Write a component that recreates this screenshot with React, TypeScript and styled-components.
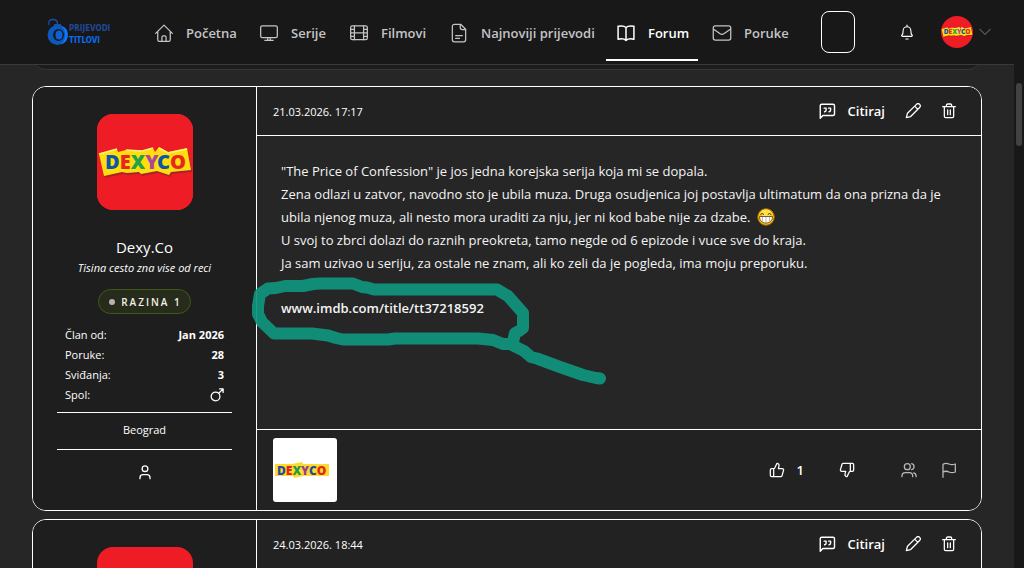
import React from "react";
import styled, { createGlobalStyle, css } from "styled-components";

const GlobalStyle = createGlobalStyle`
  *, *::before, *::after { box-sizing: border-box; }
  body {
    margin: 0;
    background: #262626;
    color: #ffffff;
    font-family: "Open Sans", "Noto Sans", sans-serif;
    font-size: 13px;
  }
  button { font: inherit; color: inherit; background: none; border: 0; padding: 0; cursor: pointer; }
  a { color: inherit; text-decoration: none; }
  h2, p, dl, dd { margin: 0; }
  svg { display: block; flex: none; }
`;

const Shell = styled.div`
  display: grid;
  grid-template-columns: minmax(0, 1fr) 10px;
  height: 100vh;
  overflow: hidden;
`;

const Page = styled.div`
  display: flex;
  flex-direction: column;
  min-height: 0;
`;

const ScrollRail = styled.div`
  background: #181818;
  padding: 83px 2px 0;
`;

const ScrollThumb = styled.div`
  height: 63px;
  border-radius: 3px;
  background: #424242;
`;

const Header = styled.header`
  position: relative;
  z-index: 2;
  flex: none;
  display: flex;
  align-items: center;
  height: 65px;
  padding: 0 23px 0 46px;
  background: #181818;
  border-bottom: 1px solid #3a3a3a;
`;

const Brand = styled.a`
  display: block;
  width: 98px;
  flex: none;
`;

const Nav = styled.nav`
  display: flex;
  gap: 4px;
  align-self: stretch;
`;

const NavLink = styled.a<{ $active?: boolean; $width: number }>`
  display: flex;
  align-items: center;
  gap: 12px;
  width: ${(p) => p.$width}px;
  padding: 6px 0 0 10px;
  margin-bottom: 3px;
  border-bottom: 2px solid ${(p) => (p.$active ? "#ffffff" : "transparent")};
  color: ${(p) => (p.$active ? "#ffffff" : "#c4c4c4")};
  font-size: 13px;
  font-weight: 600;
  white-space: nowrap;
`;

const HeaderTools = styled.div`
  display: flex;
  align-items: center;
  flex: 1;
  padding-left: 23px;
`;

const EmptyBox = styled.button`
  width: 34px;
  height: 42px;
  border: 1px solid #ffffff;
  border-radius: 8px;
`;

const BellButton = styled.button`
  margin-left: auto;
  padding: 8px;
`;

const ProfileButton = styled.button`
  display: flex;
  align-items: center;
  gap: 6px;
  margin-left: 18px;
`;

const RoundAvatar = styled.span`
  width: 32px;
  height: 32px;
  border-radius: 50%;
  overflow: hidden;
`;

const Thread = styled.main`
  display: flex;
  flex-direction: column;
  flex: 1;
  min-height: 0;
  padding: 0 32px;
  overflow: hidden;
`;

const PreviousPost = styled.div`
  flex: none;
  height: 32px;
  margin-top: -27px;
  margin-bottom: 16px;
  background: #1c1c1c;
  border: 1px solid #363636;
  border-radius: 14px;
`;

const Card = styled.article`
  position: relative;
  flex: none;
  display: grid;
  grid-template-columns: 224px minmax(0, 1fr);
  margin-bottom: 8px;
  border: 1px solid #ffffff;
  border-radius: 14px;
  overflow: hidden;
`;

const Sidebar = styled.aside`
  display: flex;
  flex-direction: column;
  align-items: center;
  padding: 27px 24px 30px;
  background: #1e1e1e;
  border-right: 1px solid #ffffff;
`;

const SquareAvatar = styled.div`
  width: 96px;
  height: 96px;
  border-radius: 16px;
  background: #ee1c25;
  overflow: hidden;
`;

const UserName = styled.h2`
  margin-top: 26px;
  font-size: 15px;
  font-weight: 400;
  line-height: 22px;
`;

const Motto = styled.p`
  font-size: 11px;
  font-style: italic;
  line-height: 20px;
`;

const Level = styled.span`
  display: flex;
  align-items: center;
  gap: 6px;
  height: 25px;
  margin-top: 11px;
  padding: 0 8px 0 10px;
  background: #262b1b;
  border: 1px solid #3e5a16;
  border-radius: 13px;
  color: #f2f2e6;
  font-size: 10px;
  font-weight: 600;
  letter-spacing: 2px;
`;

const Dot = styled.i`
  width: 6px;
  height: 6px;
  border-radius: 50%;
  background: #b4b4ac;
`;

const Stats = styled.dl`
  align-self: stretch;
  margin-top: 11px;
  padding: 0 8px 7px;
  border-bottom: 1px solid #ffffff;
`;

const Stat = styled.div`
  display: flex;
  align-items: center;
  justify-content: space-between;
  font-size: 11px;
  line-height: 20px;
  dd { font-weight: 700; }
`;

const City = styled.p`
  align-self: stretch;
  height: 37px;
  border-bottom: 1px solid #ffffff;
  font-size: 11px;
  line-height: 34px;
  text-align: center;
`;

const UserLink = styled.a`
  margin-top: 14px;
`;

const Content = styled.div`
  display: flex;
  flex-direction: column;
  min-width: 0;
`;

const bar = css`
  display: flex;
  align-items: center;
  background: #222222;
  padding: 0 16px;
`;

const PostHeader = styled.div`
  ${bar}
  height: 49px;
  gap: 4px;
  border-bottom: 1px solid #ffffff;
`;

const PostDate = styled.time`
  margin-right: auto;
  font-size: 11px;
`;

const ToolButton = styled.button<{ $muted?: boolean; $after?: number }>`
  display: flex;
  align-items: center;
  gap: 12px;
  height: 32px;
  padding: 0 8px;
  margin-right: ${(p) => p.$after ?? 0}px;
  color: ${(p) => (p.$muted ? "#b8b8b8" : "#ffffff")};
  font-weight: 600;
`;

const PostBody = styled.div`
  flex: 1;
  padding: 24px;
  background: #262626;
  color: #f4f4f4;
  font-size: 13px;
  line-height: 23px;
`;

const LinkLine = styled.p`
  margin-top: 22px;
  font-weight: 600;
`;

const Smile = styled.svg`
  display: inline-block;
  vertical-align: -4px;
  margin-left: 3px;
`;

const PostFooter = styled.div`
  ${bar}
  height: 81px;
  gap: 8px;
  border-top: 1px solid #ffffff;
`;

const Reactor = styled.button`
  width: 64px;
  height: 64px;
  margin-right: auto;
  border-radius: 3px;
  background: #ffffff;
  overflow: hidden;
`;

const MarkerStroke = styled.svg`
  position: absolute;
  left: 217px;
  top: 188px;
  pointer-events: none;
`;

const Icon = ({ size = 20, width = 1.5, children }: { size?: number; width?: number; children: React.ReactNode }) => (
  <svg width={size} height={size} viewBox="0 0 24 24" fill="none" stroke="currentColor" strokeWidth={width} strokeLinecap="round" strokeLinejoin="round" aria-hidden="true">
    {children}
  </svg>
);

const HomeIcon = () => (
  <Icon><path d="M2 12.5 12 2.5l10 10M4.5 10.5V20a2 2 0 0 0 2 2h11a2 2 0 0 0 2-2v-9.500M9.500 22v-5a1.500 1.500 0 0 1 1.500-1.500h2a1.500 1.500 0 0 1 1.500 1.500v5" /></Icon>
);
const ScreenIcon = () => (
  <Icon><rect x="2" y="3.500" width="20" height="14" rx="2" /><path d="M10.500 17.500v3M13.500 17.500v3M7 20.700h10" /></Icon>
);
const FilmIcon = () => (
  <Icon><rect x="2" y="3.500" width="20" height="16.500" rx="2" /><path d="M6.500 3.500V20M17.500 3.500V20M6.500 11.750h11M2 7.600h4.500M2 11.750h4.500M2 15.900h4.500M17.500 7.600H22M17.500 11.750H22M17.500 15.900H22" /></Icon>
);
const FileIcon = () => (
  <Icon><path d="M14 1.500H6.500a2.500 2.500 0 0 0-2.500 2.500v16a2.500 2.500 0 0 0 2.500 2.500h11A2.500 2.500 0 0 0 20 20V7.500zM13.500 1.500V5.500a2.500 2.500 0 0 0 2.500 2.500h4M8 15h8M8 18.500h4.500" /></Icon>
);
const BookIcon = () => (
  <Icon width={1.8}><path d="M12 5.500C10 3.500 6 3.200 2.500 4v15.500c3.500-.8 7.500-.5 9.500 1.500 2-2 6-2.300 9.500-1.500V4c-3.500-.8-7.500-.5-9.500 1.500zM12 5.500V21" /></Icon>
);
const MailIcon = () => (
  <Icon><rect x="1.500" y="3.500" width="21" height="17" rx="2.500" /><path d="m2 7.500 7.800 5.500a4 4 0 0 0 4.400 0L22 7.500" /></Icon>
);
const QuoteIcon = () => (
  <Icon size={18} width={1.9}><path d="M3 21.500V5a2 2 0 0 1 2-2h15a2 2 0 0 1 2 2v11a2 2 0 0 1-2 2H6.500zM8.200 8.200h2.600v2.400a2.500 2.500 0 0 1-2 2.400M14.200 8.200h2.600v2.400a2.500 2.500 0 0 1-2 2.400" /></Icon>
);
const PencilIcon = () => (
  <Icon size={16} width={1.900}><path d="M2 22l1.700-6.600L17.200 2a2.700 2.700 0 0 1 4.700 4.700L8.500 20.300zM14.500 4.700l4.800 4.800" /></Icon>
);
const TrashIcon = () => (
  <Icon size={16} width={1.900}><path d="M2.500 5.500h19M5 5.500V20a2 2 0 0 0 2 2h10a2 2 0 0 0 2-2V5.500M8 5.500V3.500A2 2 0 0 1 10 1.500h4a2 2 0 0 1 2 2v2M10 10.500v7M14 10.500v7" /></Icon>
);
const ThumbUpIcon = () => (
  <Icon size={16} width={1.900}><path d="M7 10v12M15 5.900 14 10h5.800a2 2 0 0 1 2 2.600l-2.300 8a2 2 0 0 1-2 1.400H4a2 2 0 0 1-2-2v-8a2 2 0 0 1 2-2h2.800a2 2 0 0 0 1.800-1.100L12 2a3.100 3.100 0 0 1 3 3.900z" /></Icon>
);
const ThumbDownIcon = () => (
  <Icon size={16} width={1.900}><path d="M17 14V2M9 18.100 10 14H4.200a2 2 0 0 1-2-2.600l2.300-8a2 2 0 0 1 2-1.400H20a2 2 0 0 1 2 2v8a2 2 0 0 1-2 2h-2.800a2 2 0 0 0-1.800 1.100L12 22a3.100 3.100 0 0 1-3-3.900z" /></Icon>
);
const UsersIcon = () => (
  <Icon size={16} width={1.900}><circle cx="9.500" cy="7" r="4.500" /><path d="M1.500 22v-1a5 5 0 0 1 5-5h6a5 5 0 0 1 5 5v1M16 2.600a4.500 4.500 0 0 1 0 8.800M19 16.300a5 5 0 0 1 3.700 4.700v1" /></Icon>
);
const FlagIcon = () => (
  <Icon size={16} width={1.900}><path d="M3 23V3.500C6 1.500 9 1.500 12 3s6 1.500 9.500 0V15c-3.500 1.500-6.500 1.500-9.500 0s-6-1.500-9 0" /></Icon>
);
const PersonIcon = () => (
  <Icon size={16} width={2}><circle cx="12" cy="7" r="4.300" /><path d="M4.500 22v-1.500a4.500 4.500 0 0 1 4.500-4.500h6a4.500 4.500 0 0 1 4.500 4.500V22" /></Icon>
);
const MarsIcon = () => (
  <Icon size={14} width={2.200}><circle cx="9.500" cy="14.500" r="7.500" /><path d="M15 9 22.500 1.500M16.500 1.500h6V7.500" /></Icon>
);
const BellIcon = () => (
  <Icon size={16} width={1.700}><path d="M4.500 16.500c1.200-1.300 1.700-3 1.700-6.500a5.800 5.800 0 0 1 11.600 0c0 3.500.5 5.200 1.700 6.500 1 1 .6 2-.7 2H5.200c-1.300 0-1.700-1-.7-2zM10.300 22.500h3.400M12 1.500v2" /></Icon>
);
const ChevronIcon = () => (
  <svg width="12" height="8" viewBox="0 0 12 8" fill="none" stroke="#555555" strokeWidth="1.200" aria-hidden="true"><path d="M.5 1 6 6.500 11.500 1" /></svg>
);

const letterFont = { fontFamily: '"Open Sans", sans-serif', fontWeight: 800 };

const DexyRed = ({ size }: { size: number }) => (
  <svg width={size} height={size} viewBox="0 0 96 96" role="img" aria-label="Dexy Co">
    <rect width="96" height="96" fill="#ee1c25" />
    <path d="M2 40 20 35l1 3 8-2 1 1 14-1v1l12-3 2 4 4-5 9 5 19-4 4 22-20 2-2 3-12-4-16 3-2-2-12 1-5-1-18 4z" fill="#a8232a" transform="translate(1 2)" />
    <path d="M2 40 20 35l1 3 8-2 1 1 14-1v1l12-3 2 4 4-5 9 5 19-4 4 22-20 2-2 3-12-4-16 3-2-2-12 1-5-1-18 4z" fill="#ffdd0f" />
    <path d="M2 40 20 35M29 36l16 1 11-3M62 34l9 5 19-4" fill="none" stroke="#fff27a" strokeWidth="1.500" />
    <text x="8" y="55" fontSize="20" style={letterFont}>
      <tspan fill="#0b56a5">D</tspan>
      <tspan fill="#e8251f">E</tspan>
      <tspan fill="#23a349">X</tspan>
      <tspan fill="#a9489b">Y</tspan>
      <tspan x="60" fill="#0b56a5">C</tspan>
      <tspan fill="#e8251f">O</tspan>
    </text>
  </svg>
);

const DexyWhite = () => (
  <svg width="64" height="64" viewBox="0 0 64 64" role="img" aria-label="Dexyco">
    <path d="M2 26h17l10-2 1 2h26v12H30l-9 2-1-2H2z" fill="#ffd92b" />
    <text x="4" y="37" fontSize="12" style={letterFont}>
      <tspan fill="#274b9f">D</tspan>
      <tspan fill="#e0241f">E</tspan>
      <tspan fill="#1f9b45">X</tspan>
      <tspan fill="#8d4299">Y</tspan>
      <tspan fill="#274b9f">C</tspan>
      <tspan fill="#e0241f">O</tspan>
    </text>
  </svg>
);

const Logo = () => (
  <svg width="70" height="30" viewBox="0 0 70 30" role="img" aria-label="Prijevodi titlovi">
    <path d="M3 8C2 4 4 2.500 7 2.500s4.500 1.500 4.500 4.500" fill="none" stroke="#1550a8" strokeWidth="1.300" />
    <path d="M8 7h7v4H8z" fill="#1550b0" />
    <circle cx="11.500" cy="18" r="10" fill="#0c58bd" />
    <path d="M15 8.500a10 10 0 0 1 0 19 13 13 0 0 0 0-19z" fill="#0b78ff" />
    <ellipse cx="12.500" cy="18" rx="5.500" ry="6" fill="#171a20" />
    <ellipse cx="13" cy="18" rx="3.500" ry="4.500" fill="#0c62d2" />
    <g style={{ fontFamily: '"DejaVu Sans Condensed", "DejaVu Sans", sans-serif', fontWeight: 700 }} fontSize="8">
      <text x="23" y="14" fill="#20479a">PRIJEVODI</text>
      <text x="23" y="26" fill="#0b6cf0">TITLOVI</text>
    </g>
  </svg>
);

const navItems = [
  { label: "Početna", icon: <HomeIcon />, width: 101 },
  { label: "Serije", icon: <ScreenIcon />, width: 86 },
  { label: "Filmovi", icon: <FilmIcon />, width: 96 },
  { label: "Najnoviji prijevodi", icon: <FileIcon />, width: 163 },
  { label: "Forum", icon: <BookIcon />, width: 92, active: true },
  { label: "Poruke", icon: <MailIcon />, width: 96 },
];

const PostTools = ({ date }: { date: string }) => (
  <PostHeader>
    <PostDate>{date}</PostDate>
    <ToolButton><QuoteIcon />Citiraj</ToolButton>
    <ToolButton aria-label="Uredi"><PencilIcon /></ToolButton>
    <ToolButton aria-label="Obriši"><TrashIcon /></ToolButton>
  </PostHeader>
);

export default function App() {
  return (
    <>
      <GlobalStyle />
      <Shell>
        <Page>
          <Header>
            <Brand href="#"><Logo /></Brand>
            <Nav>
              {navItems.map((item) => (
                <NavLink key={item.label} href="#" $active={item.active} $width={item.width}>
                  {item.icon}
                  {item.label}
                </NavLink>
              ))}
            </Nav>
            <HeaderTools>
              <EmptyBox aria-label="Traži" />
              <BellButton aria-label="Obavijesti"><BellIcon /></BellButton>
              <ProfileButton aria-label="Profil">
                <RoundAvatar><DexyRed size={32} /></RoundAvatar>
                <ChevronIcon />
              </ProfileButton>
            </HeaderTools>
          </Header>

          <Thread>
            <PreviousPost />
            <Card>
              <Sidebar>
                <SquareAvatar><DexyRed size={96} /></SquareAvatar>
                <UserName>Dexy.Co</UserName>
                <Motto>Tisina cesto zna vise od reci</Motto>
                <Level><Dot />RAZINA 1</Level>
                <Stats>
                  <Stat><dt>Član od:</dt><dd>Jan 2026</dd></Stat>
                  <Stat><dt>Poruke:</dt><dd>28</dd></Stat>
                  <Stat><dt>Sviđanja:</dt><dd>3</dd></Stat>
                  <Stat><dt>Spol:</dt><dd><MarsIcon /></dd></Stat>
                </Stats>
                <City>Beograd</City>
                <UserLink href="#" aria-label="Korisnik"><PersonIcon /></UserLink>
              </Sidebar>
              <Content>
                <PostTools date="21.03.2026. 17:17" />
                <PostBody>
                  <p>"The Price of Confession" je jos jedna korejska serija koja mi se dopala.</p>
                  <p>
                    Zena odlazi u zatvor, navodno sto je ubila muza. Druga osudjenica joj postavlja ultimatum da ona prizna da je
                    ubila njenog muza, ali nesto mora uraditi za nju, jer ni kod babe nije za dzabe.{" "}
                    <Smile width="18" height="18" viewBox="0 0 18 18" role="img" aria-label="smijeh">
                      <circle cx="9" cy="9" r="8.300" fill="#f9c513" stroke="#a86400" />
                      <ellipse cx="9" cy="5" rx="5.500" ry="3.500" fill="#ffe34f" />
                      <path d="M3.500 6.500q1.700-2 3.400 0M10.800 6.500q1.700-2 3.400 0" fill="none" stroke="#3b2500" />
                      <path d="M2.500 8.500h13c0 4-2.500 6.500-6.500 6.500s-6.500-2.500-6.500-6.500z" fill="#ffffff" stroke="#5a3900" strokeWidth=".8" />
                      <path d="M5.500 9v4.500M9 9v6M12.500 9v4.500" stroke="#999999" strokeWidth=".7" />
                    </Smile>
                  </p>
                  <p>U svoj to zbrci dolazi do raznih preokreta, tamo negde od 6 epizode i vuce sve do kraja.</p>
                  <p>Ja sam uzivao u seriju, za ostale ne znam, ali ko zeli da je pogleda, ima moju preporuku.</p>
                  <LinkLine><a href="#">www.imdb.com/title/tt37218592</a></LinkLine>
                </PostBody>
                <PostFooter>
                  <Reactor aria-label="Dexyco"><DexyWhite /></Reactor>
                  <ToolButton $after={11}><ThumbUpIcon />1</ToolButton>
                  <ToolButton $after={22} aria-label="Ne sviđa mi se"><ThumbDownIcon /></ToolButton>
                  <ToolButton $muted aria-label="Članovi"><UsersIcon /></ToolButton>
                  <ToolButton $muted aria-label="Prijavi"><FlagIcon /></ToolButton>
                </PostFooter>
              </Content>
              <MarkerStroke width="360" height="115" viewBox="250 275 360 115" fill="none" stroke="#10967e" strokeOpacity=".93" strokeWidth="12" strokeLinecap="round" strokeLinejoin="round" aria-hidden="true">
                <path d="M600 378.500 596 378 583 375 560 367 537 358.500 531 357 524 351 514 346 511 344H503L493 340 478 338.500H395L388 339.500H343L336 338 328 335.500 312 333.500H274L262 322 258 314V306L260 294 268 288.500 276 288 285 286H303L313 284 320 283.500H353L362 287 367 287.500 374 289.500H497L508 296 523 313V328L519 331 515 333 513 342" />
              </MarkerStroke>
            </Card>
            <Card>
              <Sidebar>
                <SquareAvatar />
              </Sidebar>
              <Content>
                <PostTools date="24.03.2026. 18:44" />
                <PostBody />
              </Content>
            </Card>
          </Thread>
        </Page>
        <ScrollRail><ScrollThumb /></ScrollRail>
      </Shell>
    </>
  );
}
